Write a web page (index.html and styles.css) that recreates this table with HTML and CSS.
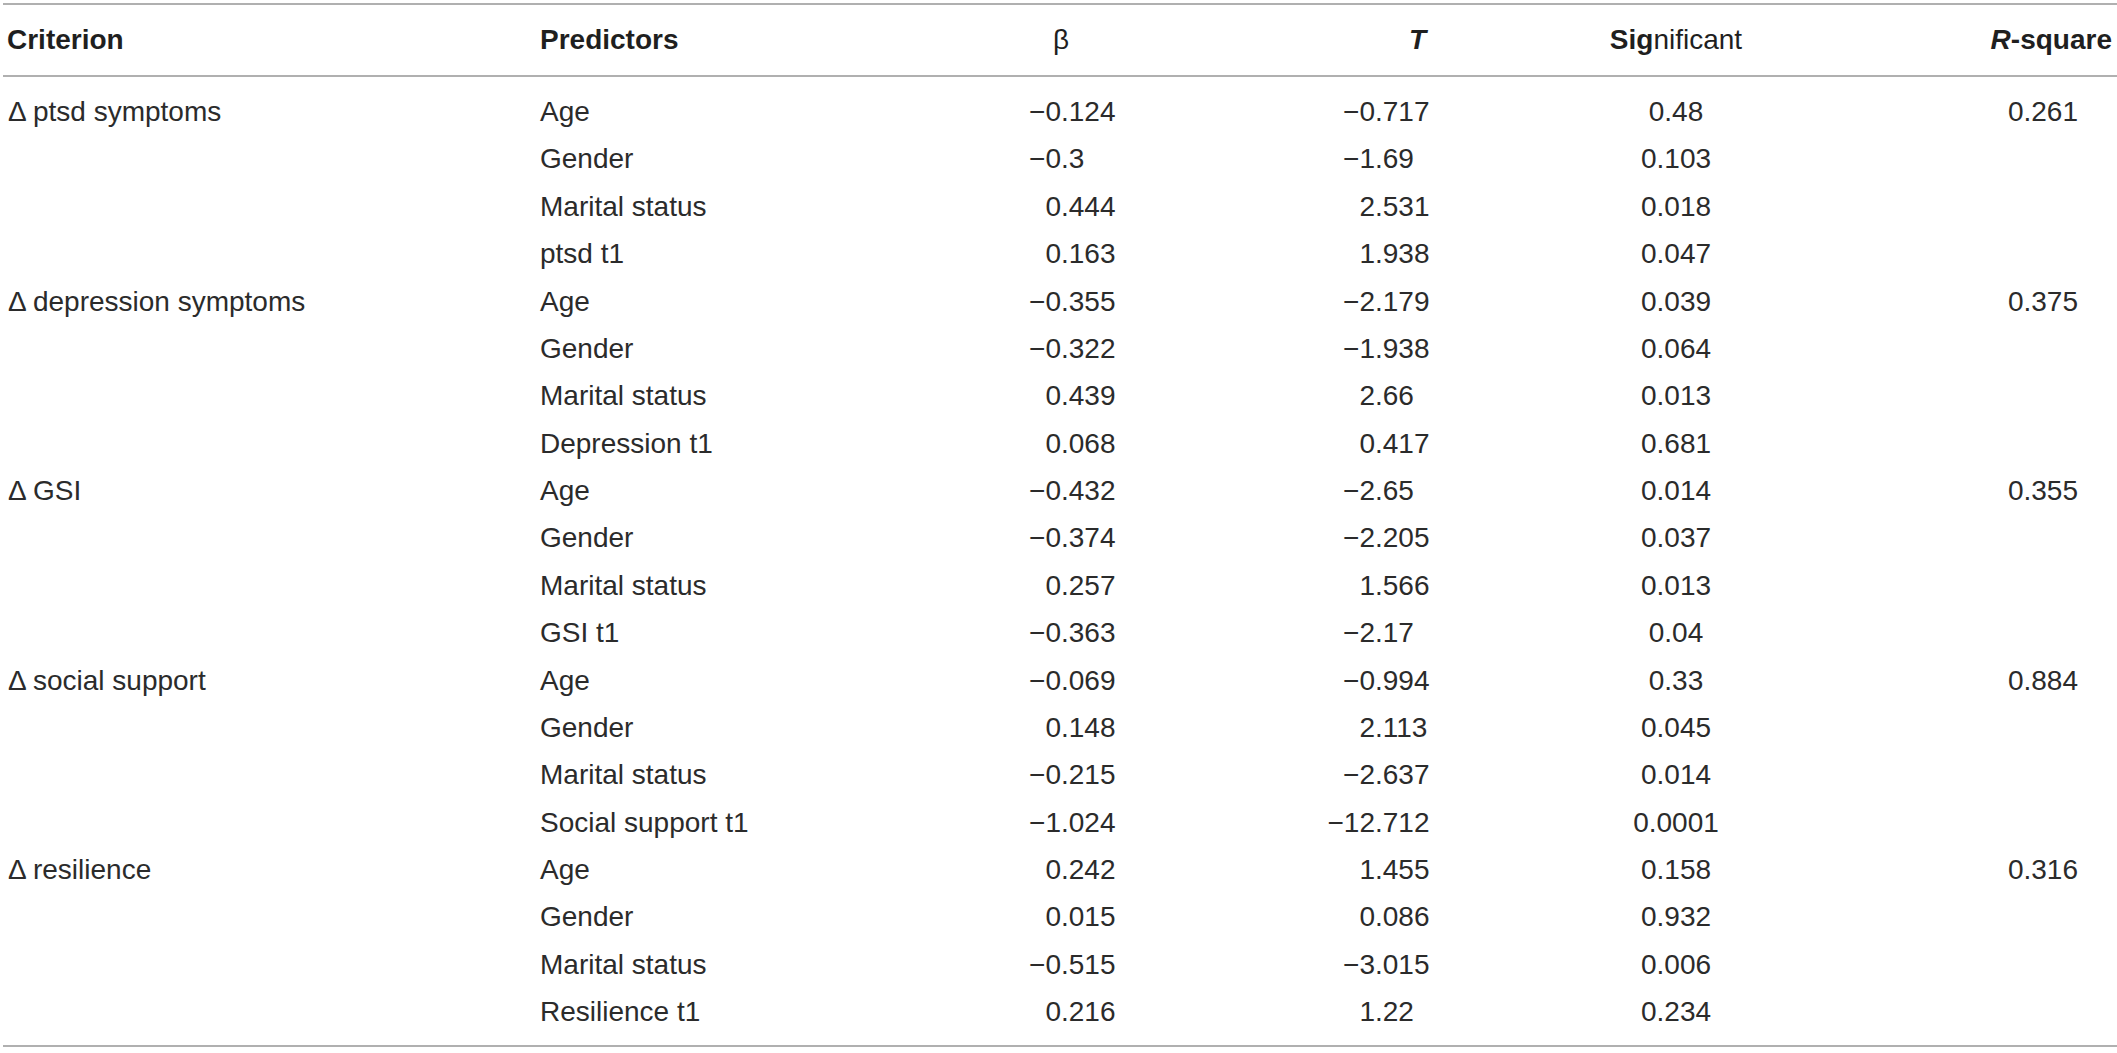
FILE: index.html
```html
<!DOCTYPE html>
<html lang="en">
<head>
<meta charset="utf-8">
<title>Regression table</title>
<link rel="stylesheet" href="styles.css">
</head>
<body>
<table class="stats">
  <colgroup>
    <col class="c-crit"><col class="c-pred"><col class="c-beta"><col class="c-t"><col class="c-sig"><col class="c-r2">
  </colgroup>
  <thead>
    <tr>
      <th class="h-crit">Criterion</th>
      <th class="h-pred">Predictors</th>
      <th class="h-beta">β</th>
      <th class="h-t"><i>T</i></th>
      <th class="h-sig">Sig<span class="reg">nificant</span></th>
      <th class="h-r2"><i>R</i>-square</th>
    </tr>
  </thead>
  <tbody>
    <tr><td class="crit">Δ ptsd symptoms</td><td>Age</td><td class="num b"><span class="int">−0</span><span class="frac">.124</span></td><td class="num t"><span class="int">−0</span><span class="frac">.717</span></td><td class="sig">0.48</td><td class="r2">0.261</td></tr>
    <tr><td class="crit"></td><td>Gender</td><td class="num b"><span class="int">−0</span><span class="frac">.3</span></td><td class="num t"><span class="int">−1</span><span class="frac">.69</span></td><td class="sig">0.103</td><td class="r2"></td></tr>
    <tr><td class="crit"></td><td>Marital status</td><td class="num b"><span class="int">0</span><span class="frac">.444</span></td><td class="num t"><span class="int">2</span><span class="frac">.531</span></td><td class="sig">0.018</td><td class="r2"></td></tr>
    <tr><td class="crit"></td><td>ptsd t1</td><td class="num b"><span class="int">0</span><span class="frac">.163</span></td><td class="num t"><span class="int">1</span><span class="frac">.938</span></td><td class="sig">0.047</td><td class="r2"></td></tr>

    <tr><td class="crit">Δ depression symptoms</td><td>Age</td><td class="num b"><span class="int">−0</span><span class="frac">.355</span></td><td class="num t"><span class="int">−2</span><span class="frac">.179</span></td><td class="sig">0.039</td><td class="r2">0.375</td></tr>
    <tr><td class="crit"></td><td>Gender</td><td class="num b"><span class="int">−0</span><span class="frac">.322</span></td><td class="num t"><span class="int">−1</span><span class="frac">.938</span></td><td class="sig">0.064</td><td class="r2"></td></tr>
    <tr><td class="crit"></td><td>Marital status</td><td class="num b"><span class="int">0</span><span class="frac">.439</span></td><td class="num t"><span class="int">2</span><span class="frac">.66</span></td><td class="sig">0.013</td><td class="r2"></td></tr>
    <tr><td class="crit"></td><td>Depression t1</td><td class="num b"><span class="int">0</span><span class="frac">.068</span></td><td class="num t"><span class="int">0</span><span class="frac">.417</span></td><td class="sig">0.681</td><td class="r2"></td></tr>

    <tr><td class="crit">Δ GSI</td><td>Age</td><td class="num b"><span class="int">−0</span><span class="frac">.432</span></td><td class="num t"><span class="int">−2</span><span class="frac">.65</span></td><td class="sig">0.014</td><td class="r2">0.355</td></tr>
    <tr><td class="crit"></td><td>Gender</td><td class="num b"><span class="int">−0</span><span class="frac">.374</span></td><td class="num t"><span class="int">−2</span><span class="frac">.205</span></td><td class="sig">0.037</td><td class="r2"></td></tr>
    <tr><td class="crit"></td><td>Marital status</td><td class="num b"><span class="int">0</span><span class="frac">.257</span></td><td class="num t"><span class="int">1</span><span class="frac">.566</span></td><td class="sig">0.013</td><td class="r2"></td></tr>
    <tr><td class="crit"></td><td>GSI t1</td><td class="num b"><span class="int">−0</span><span class="frac">.363</span></td><td class="num t"><span class="int">−2</span><span class="frac">.17</span></td><td class="sig">0.04</td><td class="r2"></td></tr>

    <tr><td class="crit">Δ social support</td><td>Age</td><td class="num b"><span class="int">−0</span><span class="frac">.069</span></td><td class="num t"><span class="int">−0</span><span class="frac">.994</span></td><td class="sig">0.33</td><td class="r2">0.884</td></tr>
    <tr><td class="crit"></td><td>Gender</td><td class="num b"><span class="int">0</span><span class="frac">.148</span></td><td class="num t"><span class="int">2</span><span class="frac">.113</span></td><td class="sig">0.045</td><td class="r2"></td></tr>
    <tr><td class="crit"></td><td>Marital status</td><td class="num b"><span class="int">−0</span><span class="frac">.215</span></td><td class="num t"><span class="int">−2</span><span class="frac">.637</span></td><td class="sig">0.014</td><td class="r2"></td></tr>
    <tr><td class="crit"></td><td>Social support t1</td><td class="num b"><span class="int">−1</span><span class="frac">.024</span></td><td class="num t"><span class="int">−12</span><span class="frac">.712</span></td><td class="sig">0.0001</td><td class="r2"></td></tr>

    <tr><td class="crit">Δ resilience</td><td>Age</td><td class="num b"><span class="int">0</span><span class="frac">.242</span></td><td class="num t"><span class="int">1</span><span class="frac">.455</span></td><td class="sig">0.158</td><td class="r2">0.316</td></tr>
    <tr><td class="crit"></td><td>Gender</td><td class="num b"><span class="int">0</span><span class="frac">.015</span></td><td class="num t"><span class="int">0</span><span class="frac">.086</span></td><td class="sig">0.932</td><td class="r2"></td></tr>
    <tr><td class="crit"></td><td>Marital status</td><td class="num b"><span class="int">−0</span><span class="frac">.515</span></td><td class="num t"><span class="int">−3</span><span class="frac">.015</span></td><td class="sig">0.006</td><td class="r2"></td></tr>
    <tr><td class="crit"></td><td>Resilience t1</td><td class="num b"><span class="int">0</span><span class="frac">.216</span></td><td class="num t"><span class="int">1</span><span class="frac">.22</span></td><td class="sig">0.234</td><td class="r2"></td></tr>
  </tbody>
</table>
</body>
</html>
```

FILE: styles.css
```css
html, body {
  margin: 0;
  padding: 0;
  background: #ffffff;
}

body {
  font-family: "Liberation Sans", Arial, Helvetica, sans-serif;
  font-size: 28px;
  color: #2b2b2b;
}

.stats {
  margin: 3px 0 0 3px;
  width: 2114px;
  table-layout: fixed;
  border-collapse: collapse;
  border-top: 2px solid #b0b0b0;
  border-bottom: 2px solid #b0b0b0;
}

.c-crit { width: 537px; }
.c-pred { width: 360px; }
.c-beta { width: 322px; }
.c-t    { width: 338px; }
.c-sig  { width: 240px; }
.c-r2   { width: 317px; }

.stats th {
  height: 70px;
  padding: 0;
  font-weight: bold;
  color: #1f1f1f;
  border-bottom: 2px solid #b0b0b0;
  vertical-align: middle;
  white-space: nowrap;
}

.stats th.h-crit { text-align: left; padding-left: 4px; }
.stats th.h-pred { text-align: left; }
.stats th.h-beta { text-align: center; font-weight: normal; }
.stats th.h-t    { text-align: right; padding-right: 134px; }
.stats th.h-sig  { text-align: center; padding-right: 8px; }
.stats th.h-r2   { text-align: right; padding-right: 5px; }
.reg { font-weight: normal; }

.stats td {
  padding: 0;
  line-height: 47.37px;
  height: 47.37px;
  white-space: nowrap;
  vertical-align: middle;
}

.stats tbody tr:first-child td { padding-top: 11px; }
.stats tbody tr:last-child td { padding-bottom: 9px; }

.stats td.crit { padding-left: 5px; }

.num .int {
  display: inline-block;
  text-align: right;
}
.num .frac {
  display: inline-block;
  text-align: left;
}
.num.b .int { width: 161px; }
.num.t .int { width: 153px; }

.stats td.sig { text-align: center; padding-right: 8px; }
.stats td.r2 { text-align: right; padding-right: 39px; }
```
